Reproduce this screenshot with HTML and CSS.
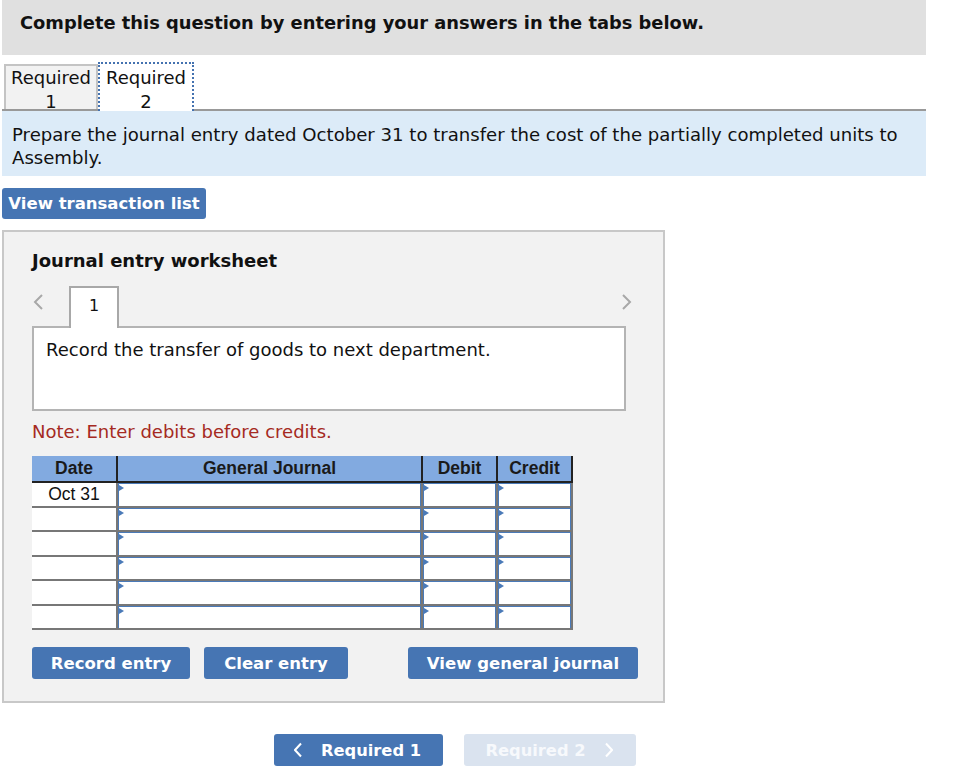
FILE: index.html
```html
<!DOCTYPE html>
<html>
<head>
<meta charset="utf-8">
<link rel="stylesheet" href="styles.css">
</head>
<body>
<div class="page">
  <div class="banner">Complete this question by entering your answers in the tabs below.</div>

  <div class="tabs">
    <div class="tab">Required<br>1</div>
    <div class="tab active">Required<br>2</div>
  </div>

  <div class="prompt">Prepare the journal entry dated October 31 to transfer the cost of the partially completed units to Assembly.</div>

  <button class="btn btn-list">View transaction list</button>

  <div class="panel">
    <h2 class="panel-title">Journal entry worksheet</h2>

    <div class="pager">
      <svg class="chev" width="12" height="18" viewBox="0 0 12 18"><path d="M10 2 L3 9 L10 16" fill="none" stroke="#a8a8a8" stroke-width="2"/></svg>
      <div class="page-tab">1</div>
      <svg class="chev chev-right" width="12" height="18" viewBox="0 0 12 18"><path d="M2 2 L9 9 L2 16" fill="none" stroke="#a8a8a8" stroke-width="2"/></svg>
    </div>
    <div class="record-box">Record the transfer of goods to next department.</div>

    <p class="note">Note: Enter debits before credits.</p>

    <table class="journal">
      <thead>
        <tr><th class="c-date">Date</th><th class="c-acct">General Journal</th><th class="c-num">Debit</th><th class="c-num last">Credit</th></tr>
      </thead>
      <tbody>
        <tr><td class="date">Oct 31</td><td class="inp"></td><td class="inp"></td><td class="inp"></td></tr>
        <tr><td class="date"></td><td class="inp"></td><td class="inp"></td><td class="inp"></td></tr>
        <tr><td class="date"></td><td class="inp"></td><td class="inp"></td><td class="inp"></td></tr>
        <tr><td class="date"></td><td class="inp"></td><td class="inp"></td><td class="inp"></td></tr>
        <tr><td class="date"></td><td class="inp"></td><td class="inp"></td><td class="inp"></td></tr>
        <tr><td class="date"></td><td class="inp"></td><td class="inp"></td><td class="inp"></td></tr>
      </tbody>
    </table>

    <div class="actions">
      <button class="btn btn-record">Record entry</button>
      <button class="btn btn-clear">Clear entry</button>
      <button class="btn btn-view">View general journal</button>
    </div>
  </div>

  <div class="bottom-nav">
    <button class="btn btn-prev"><svg width="8" height="16" viewBox="0 0 8 16"><path d="M7 1.5 L1 8 L7 14.5" fill="none" stroke="#fff" stroke-width="2"/></svg>Required 1</button>
    <button class="btn btn-next">Required 2<svg width="8" height="16" viewBox="0 0 8 16"><path d="M1 1.5 L7 8 L1 14.5" fill="none" stroke="#fff" stroke-width="2"/></svg></button>
  </div>
</div>
</body>
</html>
```
FILE: styles.css
```css
* { box-sizing: border-box; }
body {
  margin: 0;
  background: #fff;
  font-family: "DejaVu Sans", Verdana, sans-serif;
  color: #111;
}
.page {
  padding-left: 2px;
  width: 926px;
}
.banner {
  height: 55px;
  background: #e0e0e0;
  padding: 12px 0 0 18px;
  font-size: 17.85px;
  line-height: 21px;
  font-weight: bold;
  color: #111;
}
.tabs {
  display: flex;
  align-items: flex-end;
  margin-top: 7px;
  padding-left: 2px;
  border-bottom: 2px solid #999;
  height: 49px;
}
.tab {
  width: 94px;
  height: 45px;
  background: #f2f2f2;
  border: 2px solid #c4c4c4;
  border-bottom: none;
  text-align: center;
  font-size: 18px;
  line-height: 24px;
  padding: 0;
}
.tab.active {
  width: 96px;
  height: 49px;
  background: #fff;
  border: 2px dotted #4472b0;
  border-bottom: none;
  margin-bottom: -2px;
  padding-top: 2px;
  position: relative;
}
.prompt {
  background: #dcebf8;
  padding: 12px 10px 0 10px;
  font-size: 18.1px;
  line-height: 23px;
  height: 65px;
  color: #111;
}
.btn {
  border: none;
  border-radius: 3px;
  background: #4675b3;
  color: #fff;
  font-family: "DejaVu Sans", Verdana, sans-serif;
  font-weight: bold;
  font-size: 16.5px;
  cursor: pointer;
  padding: 0;
}
.btn-list {
  display: block;
  margin-top: 12px;
  width: 204px;
  height: 31px;
}
.panel {
  margin-top: 11px;
  width: 663px;
  height: 473px;
  background: #f2f2f2;
  border: 2px solid #c8c8c8;
  padding: 0 0 0 28px;
}
.panel-title {
  margin: 0;
  padding-top: 18px;
  font-size: 18px;
  font-weight: bold;
  line-height: 22px;
  color: #111;
}
.pager {
  display: flex;
  align-items: flex-start;
  margin-top: 14px;
  height: 40px;
  width: 606px;
}
.chev { margin: 7px 0 0 0; flex: none; }
.chev-right { margin-left: auto; margin-right: 5px; }
.page-tab {
  width: 50px;
  height: 42px;
  margin-left: 25px;
  background: #fff;
  border: 2px solid #a8a8a8;
  border-bottom: none;
  text-align: center;
  font-size: 16px;
  line-height: 36px;
  padding: 0;
  position: relative;
  z-index: 1;
}
.record-box {
  width: 594px;
  height: 85px;
  background: #fff;
  border: 2px solid #b4b4b4;
  padding: 11px 12px;
  font-size: 18px;
  line-height: 22px;
}
.note {
  margin: 10px 0 0 0;
  color: #a52a22;
  font-size: 18px;
  line-height: 22px;
}
.journal {
  margin-top: 13px;
  border-collapse: collapse;
  font-family: "Liberation Sans", Arial, sans-serif;
  font-size: 17.5px;
  table-layout: fixed;
  width: 540px;
}
.journal th {
  background: #82aae0;
  height: 26px;
  padding: 0;
  font-weight: bold;
  color: #1a1a1a;
  border-bottom: 2px solid #222;
  border-left: 2px solid #222;
  text-align: center;
}
.journal th.c-date { border-left: none; width: 85px; }
.journal th.c-acct { width: 305px; }
.journal th.c-num { width: 75px; }
.journal th.last { border-right: 2px solid #222; width: 75px; }
.journal td {
  height: 24.5px;
  padding: 0;
  background: #fff;
  border-bottom: 2px solid #777;
  border-left: 2px solid #777;
  border-right: 2px solid #777;
}
.journal td.date {
  border-left: none;
  text-align: center;
  color: #111;
  vertical-align: middle;
}
.journal td.inp {
  box-shadow: inset 1px 1px 0 #4a7ab8, inset -1px 0 0 #4a7ab8;
  position: relative;
}
.journal td.inp::before {
  content: "";
  position: absolute;
  left: 1px;
  top: 2px;
  border-left: 5px solid #4a7ab8;
  border-top: 3px solid transparent;
  border-bottom: 3px solid transparent;
}
.actions {
  display: flex;
  margin-top: 17px;
  height: 32px;
}
.btn-record { width: 158px; height: 32px; }
.btn-clear { width: 144px; height: 32px; margin-left: 14px; }
.btn-view { width: 230px; height: 32px; margin-left: 60px; }
.bottom-nav {
  display: flex;
  margin: 31px 0 0 272px;
  gap: 21px;
}
.btn-prev, .btn-next {
  display: flex;
  align-items: center;
  justify-content: center;
  gap: 19px;
  height: 32px;
  font-size: 16.3px;
}
.btn-prev { width: 169px; padding-right: 2px; }
.btn-next { width: 172px; background: #dae3ef; color: #f7f9fc; padding-right: 2px; }
```
